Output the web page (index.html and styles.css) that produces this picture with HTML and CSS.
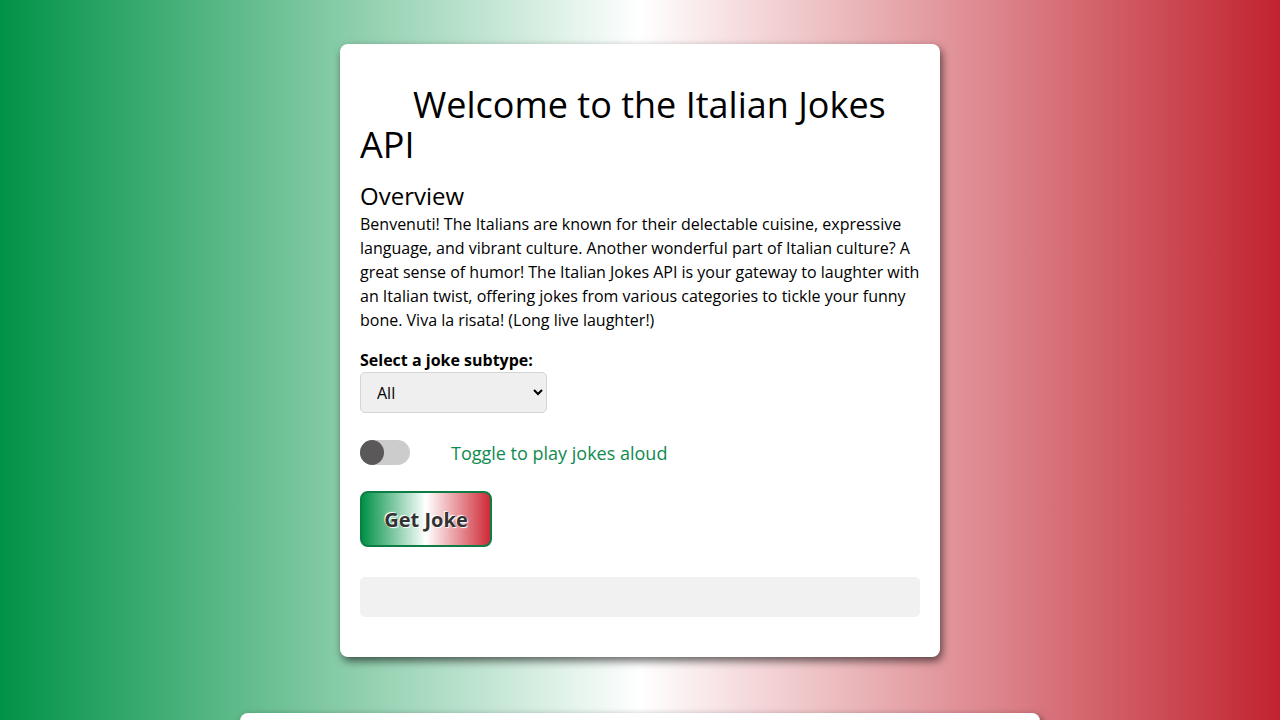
FILE: index.html
```html
<!DOCTYPE html>
<html lang="en">
<head>
  <meta charset="UTF-8">
  <title>Italian Jokes API</title>
  <meta name="viewport" content="width=device-width, initial-scale=1.0">
  <link rel="stylesheet" href="styles.css">
</head>
<body>
  <main class="page">
    <section class="card">
      <h1>Welcome to the Italian Jokes API</h1>
      <h2>Overview</h2>
      <p>Benvenuti! The Italians are known for their delectable cuisine, expressive language, and vibrant culture. Another wonderful part of Italian culture? A great sense of humor! The Italian Jokes API is your gateway to laughter with an Italian twist, offering jokes from various categories to tickle your funny bone. Viva la risata! (Long live laughter!)</p>

      <label class="field-label" for="subtype">Select a joke subtype:</label>
      <select id="subtype" class="subtype">
        <option>All</option>
        <option>Pasta</option>
        <option>Pizza</option>
        <option>Family</option>
      </select>

      <div class="toggle-row">
        <label class="switch">
          <input type="checkbox" id="speak">
          <span class="slider"></span>
        </label>
        <span class="toggle-text">Toggle to play jokes aloud</span>
      </div>

      <button class="joke-btn" id="get-joke">Get Joke</button>

      <div class="joke-box" id="joke"></div>
    </section>

    <section class="card card-wide">
      <h2>Endpoints</h2>
      <p>GET /jokes/random returns a random Italian joke.</p>
    </section>
  </main>
</body>
</html>
```

FILE: styles.css
```css
body {
  margin: 0;
  font-family: 'Open Sans', 'Noto Sans', Arial, sans-serif;
  color: #000;
  background: linear-gradient(to right, #009246 0%, #ffffff 50%, #c1232f 100%);
  min-height: 100vh;
}
.page {
  display: flex;
  flex-direction: column;
  align-items: center;
  gap: 56px;
  padding: 44px 0 40px 0;
}
.card {
  background: #fff;
  width: 600px;
  box-sizing: border-box;
  padding: 20px 20px 40px 20px;
  border-radius: 8px;
  box-shadow: 2px 4px 8px rgba(0,0,0,0.6);
}
.card-wide {
  width: 800px;
  padding-top: 40px;
}
.card h1 {
  font-size: 36px;
  line-height: 40px;
  font-weight: 400;
  margin: 21px 0 17px 0;
  text-indent: 53px;
}
.card h2 {
  font-size: 24px;
  line-height: 28px;
  font-weight: 400;
  margin: 0;
}
.card p {
  font-size: 16px;
  line-height: 24px;
  margin: 2px 0 16px 0;
}
.field-label {
  display: block;
  font-weight: 700;
  font-size: 16px;
  line-height: 24px;
}
.subtype {
  width: 187px;
  height: 41px;
  padding: 0 12px;
  font-family: inherit;
  font-size: 16px;
  color: #000;
  background: #efefef;
  border: 1px solid #d4d4d4;
  border-radius: 5px;
}
.toggle-row {
  display: flex;
  align-items: center;
  gap: 41px;
  margin-top: 27px;
}
.switch {
  position: relative;
  display: inline-block;
  width: 50px;
  height: 25px;
}
.switch input {
  opacity: 0;
  width: 0;
  height: 0;
}
.slider {
  position: absolute;
  inset: 0;
  background: #cccccc;
  border-radius: 13px;
  cursor: pointer;
}
.slider::before {
  content: "";
  position: absolute;
  left: 0;
  top: 0;
  width: 24px;
  height: 25px;
  border-radius: 50%;
  background: #5b5859;
  transition: transform 0.2s;
}
.switch input:checked + .slider::before {
  transform: translateX(26px);
}
.toggle-text {
  color: #0f8a4f;
  font-size: 18px;
}
.joke-btn {
  display: block;
  margin-top: 26px;
  width: 132px;
  height: 56px;
  font-family: inherit;
  font-size: 20px;
  font-weight: 700;
  color: #333;
  text-shadow: 1px 1px 1px #fff, -1px -1px 1px #fff;
  background: linear-gradient(to right, #009246 0%, #ffffff 50%, #ce2b37 100%);
  border: 2px solid #0d7d45;
  border-radius: 8px;
  cursor: pointer;
}
.joke-box {
  margin-top: 30px;
  min-height: 40px;
  background: #f1f1f1;
  border-radius: 5px;
}
```
